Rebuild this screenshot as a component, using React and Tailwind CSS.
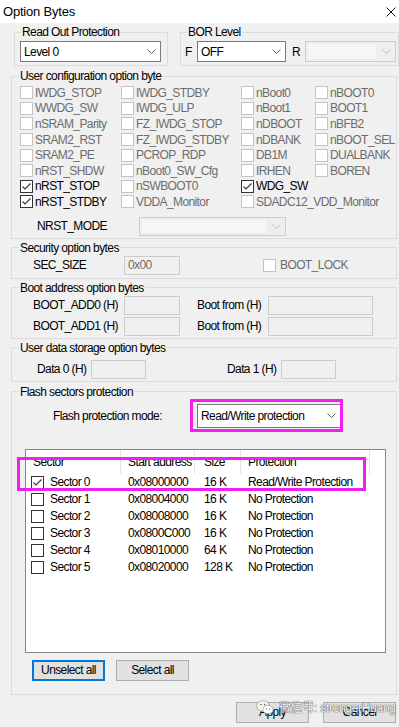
import React from 'react';

const GRAY = 'text-[#6d6d6d]';

function Check({ checked, disabled }) {
  return (
    <span
      className={`flex h-[13px] w-[13px] shrink-0 items-center justify-center border bg-white ${
        disabled ? 'border-[#c4c4c4]' : 'border-[#333333]'
      }`}
    >
      {checked && (
        <svg width="11" height="11" viewBox="0 0 11 11">
          <polyline points="1.5,5.5 4,8 9.5,2.5" fill="none" stroke="#333333" strokeWidth="1.1" />
        </svg>
      )}
    </span>
  );
}

function Chevron({ color = '#606060' }) {
  return (
    <svg width="9" height="5" viewBox="0 0 9 5" className="shrink-0">
      <polyline points="0.5,0.5 4.5,4.5 8.5,0.5" fill="none" stroke={color} strokeWidth="1" />
    </svg>
  );
}

function Select({ value, className = '' }) {
  return (
    <div
      className={`flex items-center justify-between border border-[#7a7a7a] bg-white pl-[3px] pr-[4px] ${className}`}
    >
      <span>{value}</span>
      <Chevron />
    </div>
  );
}

function DisabledSelect({ className = '' }) {
  return (
    <div className={`flex items-center border border-[#cccccc] bg-[#eeeeee] pr-[4px] ${className}`}>
      <div className="m-[2px] h-[calc(100%-4px)] flex-1 bg-[#f6f6f6]" />
      <div className="ml-[4px]">
        <Chevron color="#bdbdbd" />
      </div>
    </div>
  );
}

function Field({ value, className = '' }) {
  return (
    <div
      className={`flex h-[19px] items-center border border-[#cccccc] bg-[#f0f0f0] pl-[3px] ${GRAY} ${className}`}
    >
      {value}
    </div>
  );
}

function Group({ title, className = '', legend = 'ml-[7px]', children }) {
  return (
    <fieldset className={`border border-[#dcdcdc] ${className}`}>
      <legend className={`px-[1px] leading-[14px] ${legend}`}>{title}</legend>
      {children}
    </fieldset>
  );
}

function Option({ label, checked, enabled }) {
  return (
    <div className="flex h-[15.6px] items-center gap-[2px] whitespace-nowrap">
      <Check checked={checked} disabled={!enabled} />
      <span className={enabled ? 'text-black' : GRAY}>{label}</span>
    </div>
  );
}

const columns = [
  {
    w: 'w-[101px]',
    items: [
      ['IWDG_STOP'],
      ['WWDG_SW'],
      ['nSRAM_Parity'],
      ['SRAM2_RST'],
      ['SRAM2_PE'],
      ['nRST_SHDW'],
      ['nRST_STOP', true],
      ['nRST_STDBY', true],
    ],
  },
  {
    w: 'w-[120px]',
    items: [
      ['IWDG_STDBY'],
      ['IWDG_ULP'],
      ['FZ_IWDG_STOP'],
      ['FZ_IWDG_STDBY'],
      ['PCROP_RDP'],
      ['nBoot0_SW_Cfg'],
      ['nSWBOOT0'],
      ['VDDA_Monitor'],
    ],
  },
  {
    w: 'w-[74px]',
    items: [
      ['nBoot0'],
      ['nBoot1'],
      ['nDBOOT'],
      ['nDBANK'],
      ['DB1M'],
      ['IRHEN'],
      ['WDG_SW', true],
      ['SDADC12_VDD_Monitor'],
    ],
  },
  {
    w: 'flex-1',
    items: [['nBOOT0'], ['BOOT1'], ['nBFB2'], ['nBOOT_SEL'], ['DUALBANK'], ['BOREN']],
  },
];

const sectors = [
  ['Sector 0', '0x08000000', '16 K', 'Read/Write Protection', true],
  ['Sector 1', '0x08004000', '16 K', 'No Protection'],
  ['Sector 2', '0x08008000', '16 K', 'No Protection'],
  ['Sector 3', '0x0800C000', '16 K', 'No Protection'],
  ['Sector 4', '0x08010000', '64 K', 'No Protection'],
  ['Sector 5', '0x08020000', '128 K', 'No Protection'],
];

function Button({ label, focused }) {
  return (
    <div
      className={`flex h-[21px] w-[73px] items-center justify-center bg-[#e1e1e1] ${
        focused ? 'border-2 border-[#0078d7]' : 'border border-[#adadad]'
      }`}
    >
      {label}
    </div>
  );
}

export default function App() {
  return (
    <div className="relative h-[727px] w-[399px] overflow-hidden bg-[#f0f0f0] font-['Liberation_Sans',Arial,sans-serif] text-[12px] leading-[14px] tracking-[-0.6px] text-black">
      {/* title bar */}
      <div className="flex h-[23px] items-center justify-between bg-white pl-[3px] pr-[3px]">
        <span className="text-[13px] tracking-[-0.2px]">Option Bytes</span>
        <svg width="10" height="10" viewBox="0 0 10 10">
          <path d="M0.5 0.5 L9.5 9.5 M9.5 0.5 L0.5 9.5" stroke="#111" strokeWidth="1" />
        </svg>
      </div>

      <div className="flex flex-col">
        {/* top selects */}
        <div className="mt-[2px] flex">
          <Group title="Read Out Protection" legend="ml-[6px]" className="ml-[14px] w-[154px]">
            <div className="pt-[2px] pb-[3px] pl-[5px]">
              <Select value="Level 0" className="h-[21px] w-[141px]" />
            </div>
          </Group>
          <Group title="BOR Level" legend="ml-[6px]" className="ml-[12px] w-[219px]">
            <div className="flex items-center pt-[2px] pb-[3px] pl-[4px]">
              <span className="w-[12px]">F</span>
              <Select value="OFF" className="h-[21px] w-[89px]" />
              <span className="ml-[6px] w-[13px]">R</span>
              <DisabledSelect className="h-[21px] w-[91px]" />
            </div>
          </Group>
        </div>

        {/* user configuration */}
        <Group title="User configuration option byte" className="mt-[3px] ml-[11px] w-[386px]">
          <div className="flex pt-[2px] pl-[8px]">
            {columns.map((col, i) => (
              <div key={i} className={`flex flex-col ${col.w}`}>
                {col.items.map(([label, on]) => (
                  <Option key={label} label={label} checked={on} enabled={on} />
                ))}
              </div>
            ))}
          </div>
          <div className="mt-[7px] flex items-center pb-[2px] pl-[25px]">
            <span className="w-[102px]">NRST_MODE</span>
            <DisabledSelect className="h-[19px] w-[147px]" />
          </div>
        </Group>

        {/* security */}
        <Group title="Security option bytes" className="mt-[2px] ml-[11px] w-[386px]">
          <div className="flex items-center pt-[1px] pb-[3px] pl-[21px]">
            <span className="w-[91px]">SEC_SIZE</span>
            <Field value="0x00" className="w-[56px]" />
            <div className="ml-[83px] flex items-center gap-[4px]">
              <Check disabled />
              <span className={GRAY}>BOOT_LOCK</span>
            </div>
          </div>
        </Group>

        {/* boot address */}
        <Group title="Boot address option bytes" className="mt-[2px] ml-[11px] w-[386px]">
          <div className="flex flex-col gap-[2px] pt-[1px] pb-[2px] pl-[21px]">
            {['BOOT_ADD0 (H)', 'BOOT_ADD1 (H)'].map((l) => (
              <div key={l} className="flex items-center">
                <span className="w-[91px]">{l}</span>
                <Field className="w-[56px]" />
                <span className="ml-[17px] w-[71px]">Boot from (H)</span>
                <Field className="w-[105px]" />
              </div>
            ))}
          </div>
        </Group>

        {/* user data */}
        <Group title="User data storage option bytes" className="mt-[2px] ml-[11px] w-[386px]">
          <div className="flex items-center pt-[5px] pb-[2px] pl-[25px]">
            <span className="w-[54px]">Data 0 (H)</span>
            <Field className="w-[55px]" />
            <span className="ml-[81px] w-[54px]">Data 1 (H)</span>
            <Field className="w-[55px]" />
          </div>
        </Group>

        {/* flash sectors */}
        <Group title="Flash sectors protection" className="mt-[3px] ml-[11px] w-[386px]">
          <div className="flex items-center pt-[5px]">
            <span className="ml-[41px] w-[144px]">Flash protection mode:</span>
            <Select value="Read/Write protection" className="h-[24px] w-[144px]" />
          </div>

          <div className="mt-[21px] ml-[13px] h-[204px] w-[361px] border border-[#828790] bg-white">
            <div className="flex h-[24px] items-center">
              <div className="flex h-full w-[95px] items-center border-r border-[#e5e5e5] pl-[7px]">Sector</div>
              <div className="flex h-full w-[74px] items-center border-r border-[#e5e5e5] pl-[7px]">Start address</div>
              <div className="flex h-full w-[46px] items-center border-r border-[#e5e5e5] pl-[9px]">Size</div>
              <div className="flex h-full w-[129px] items-center border-r border-[#e5e5e5] pl-[7px]">Protection</div>
            </div>
            {sectors.map(([name, addr, size, prot, on]) => (
              <div key={name} className="flex h-[17px] items-center whitespace-nowrap">
                <div className="flex w-[95px] items-center gap-[6px] pl-[5px]">
                  <Check checked={on} />
                  <span>{name}</span>
                </div>
                <div className="w-[74px] pl-[7px]">{addr}</div>
                <div className="w-[46px] pl-[9px]">{size}</div>
                <div className="pl-[7px]">{prot}</div>
              </div>
            ))}
          </div>

          <div className="mt-[7px] flex gap-[11px] pb-[13px] pl-[20px]">
            <Button label="Unselect all" focused />
            <Button label="Select all" />
          </div>
        </Group>

        <div className="mt-[7px] flex gap-[14px] pl-[236px]">
          <Button label="Apply" />
          <Button label="Cancel" />
        </div>
      </div>

      {/* red-pen highlight marks */}
      <div className="absolute left-[190px] top-[399px] h-[33px] w-[153px] border-[3px] border-[#f020f0]" />
      <div className="absolute left-[17px] top-[457px] h-[34px] w-[349px] border-[3px] border-[#f020f0]" />

      {/* watermark */}
      <div className="absolute left-[256px] top-[700px] flex items-center gap-[5px] text-[12px] tracking-normal text-[#f6f6f6] [text-shadow:0_0_1px_#444,0_0_1px_#444]">
        <svg width="18" height="15" viewBox="0 0 18 15">
          <ellipse cx="7" cy="6" rx="6.3" ry="5.3" fill="#f8f8f8" stroke="#9a9a9a" strokeWidth="0.8" />
          <ellipse cx="12" cy="9.5" rx="5.2" ry="4.3" fill="#ffffff" stroke="#9a9a9a" strokeWidth="0.8" />
          <circle cx="5" cy="4.5" r="0.8" fill="#555" />
          <circle cx="8.6" cy="4.5" r="0.8" fill="#555" />
          <circle cx="10.5" cy="8.8" r="0.6" fill="#666" />
          <circle cx="13.6" cy="8.8" r="0.6" fill="#666" />
        </svg>
        <span className="font-['Liberation_Sans','Noto_Sans_CJK_SC',sans-serif] tracking-[-0.3px]">微信号: strongerHuang</span>
      </div>
    </div>
  );
}
